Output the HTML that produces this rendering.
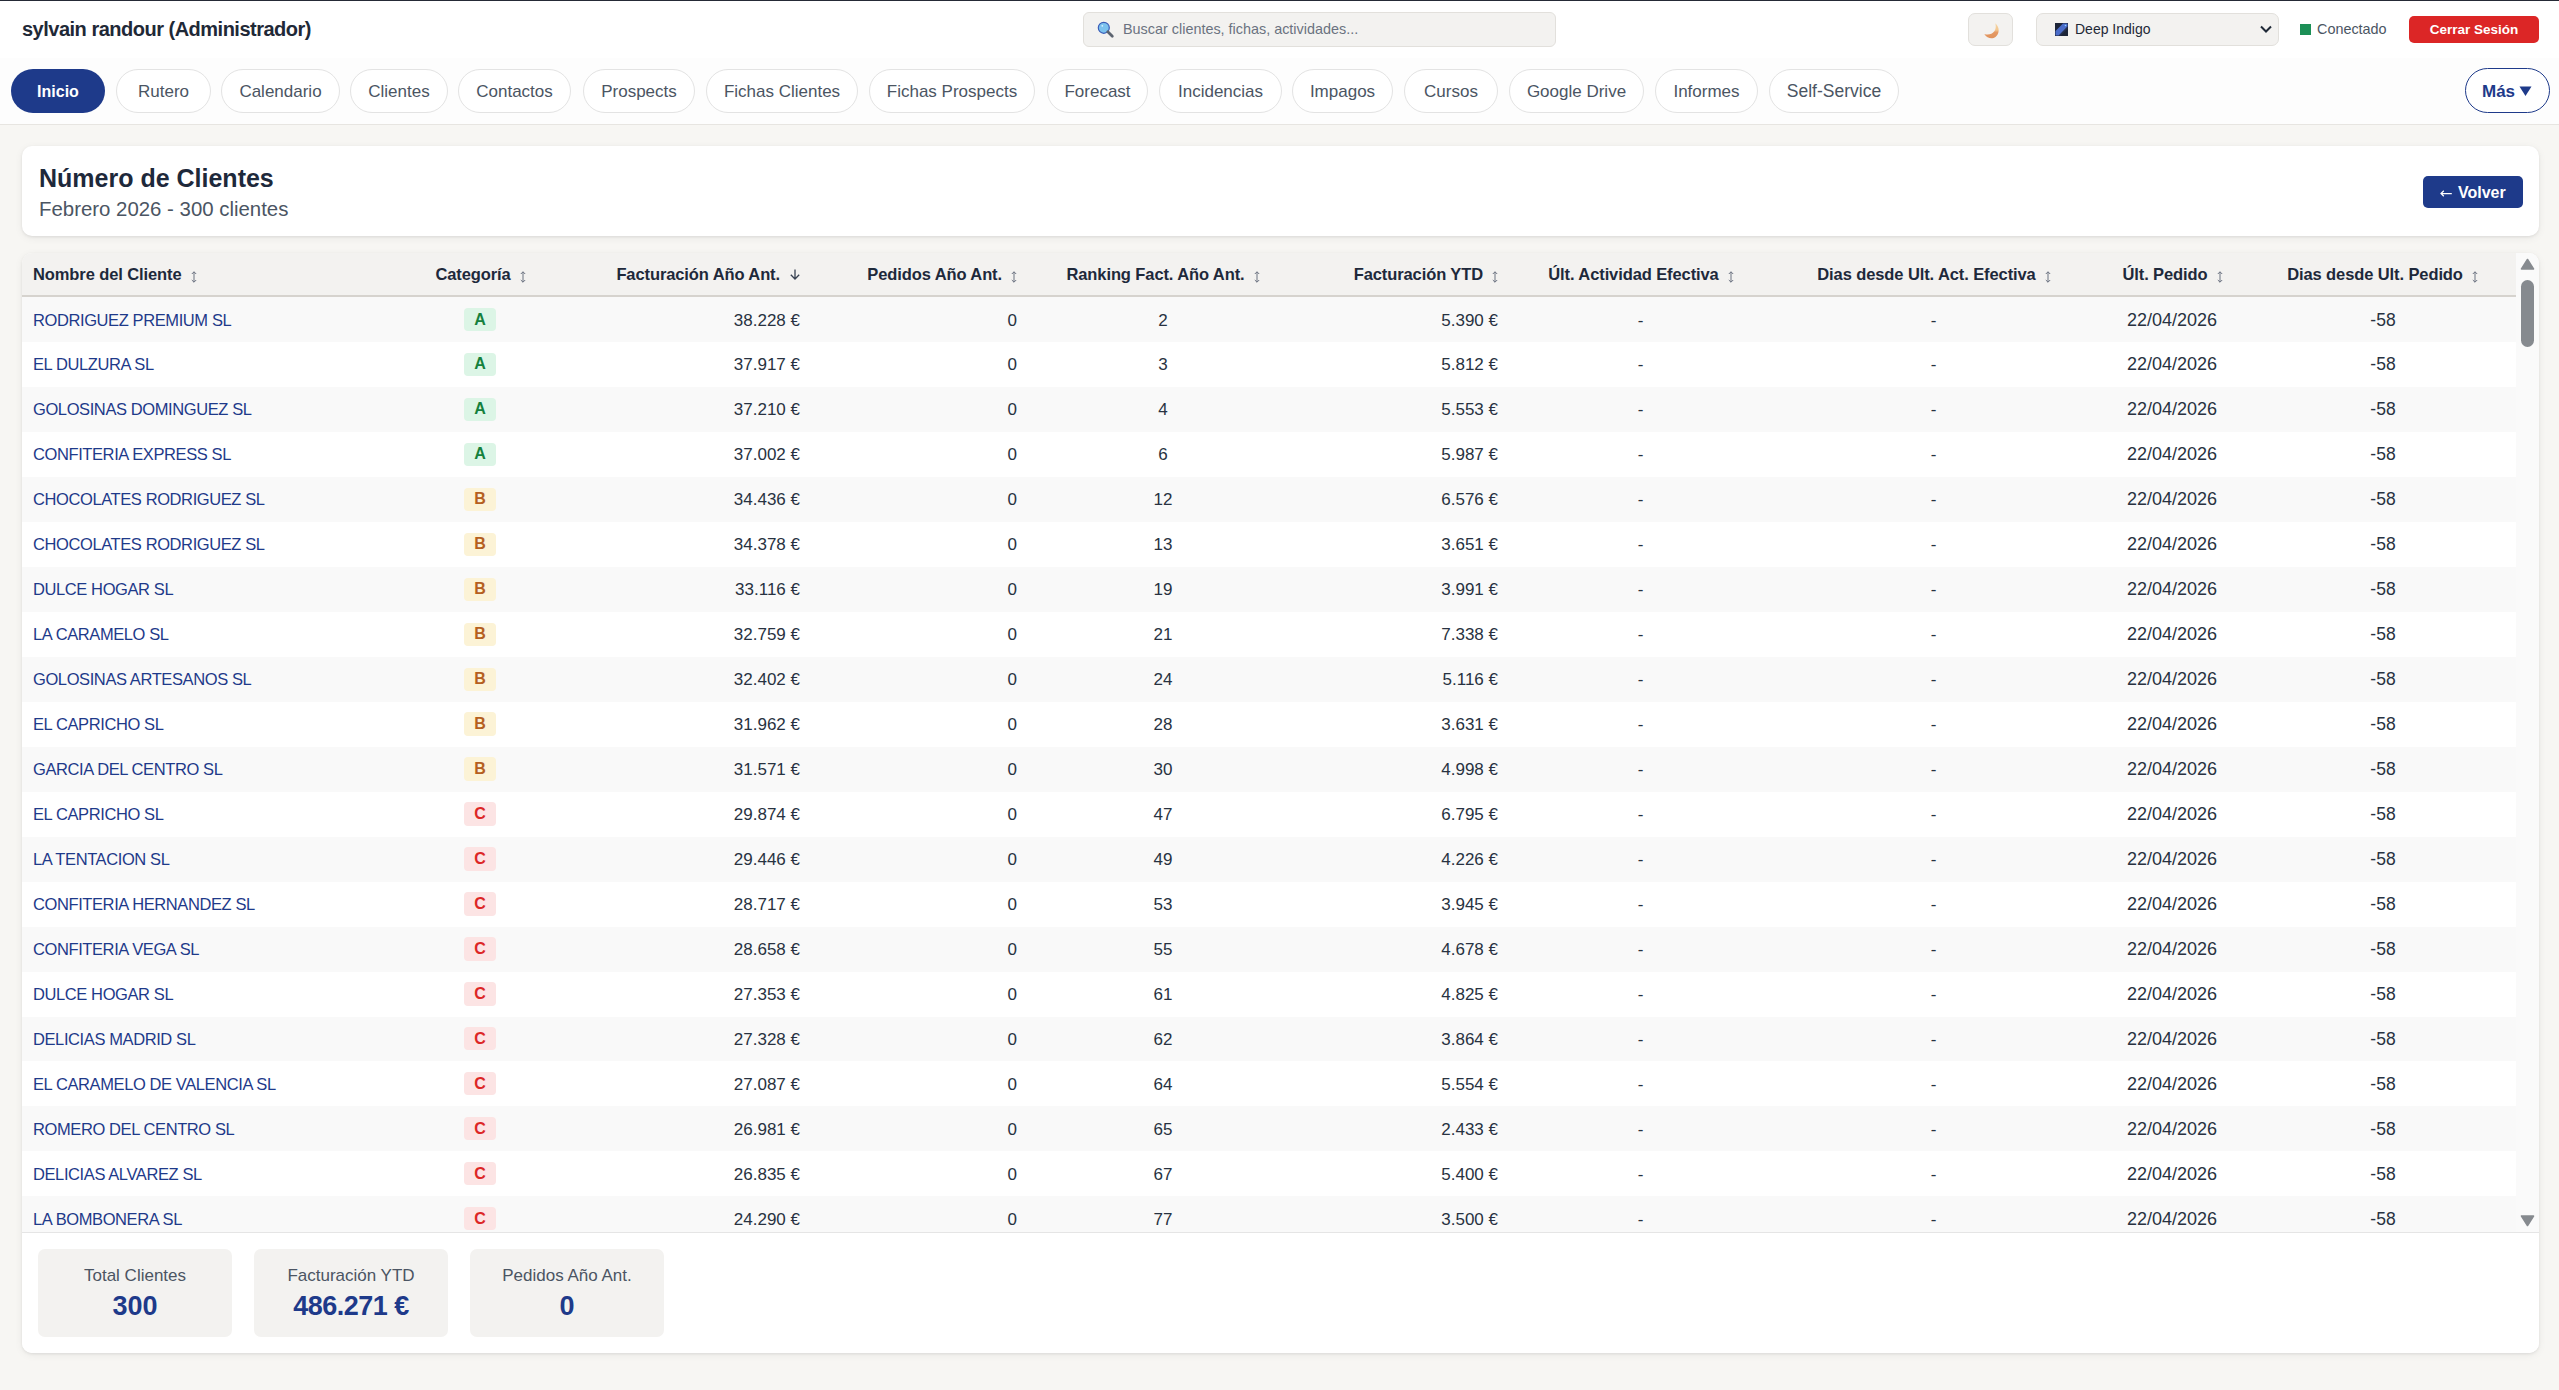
<!DOCTYPE html>
<html><head><meta charset="utf-8"><title>Número de Clientes</title>
<style>
html,body{margin:0;padding:0;}
body{width:2559px;height:1390px;position:relative;overflow:hidden;background:#f7f6f3;font-family:"Liberation Sans", sans-serif;}
.t{position:absolute;white-space:pre;}
</style></head><body>
<div style="position:absolute;left:0px;top:0px;width:2559px;height:58px;background:#fff;"></div>
<div style="position:absolute;left:0px;top:0px;width:2559px;height:1px;background:#252a36;"></div>
<div class="t" style="left:22px;top:19px;font-size:20px;line-height:20px;font-weight:700;color:#1f2937;letter-spacing:-0.5px;">sylvain randour (Administrador)</div>
<div style="position:absolute;left:1083px;top:12px;width:473px;height:35px;background:#f3f2f0;border:1px solid #e2e0dc;border-radius:6px;box-sizing:border-box;"></div>
<svg class="t" style="left:1097px;top:21px" width="18" height="18" viewBox="0 0 18 18"><circle cx="6.8" cy="6.8" r="5.5" fill="#7cc2ee" stroke="#3a5db8" stroke-width="1.2"/><circle cx="5.3" cy="4.8" r="0.9" fill="#d9f0ff"/><path d="M10.8 10.8 L15.3 15.3" stroke="#5c6470" stroke-width="2.8" stroke-linecap="round"/></svg>
<div class="t" style="left:1123px;top:22px;font-size:14.4px;line-height:14.4px;font-weight:400;color:#6b7280;">Buscar clientes, fichas, actividades...</div>
<div style="position:absolute;left:1968px;top:13px;width:45px;height:33px;background:#f3f2f0;border:1px solid #e2e0dc;border-radius:7px;box-sizing:border-box;"></div>
<svg class="t" style="left:1984px;top:23px" width="16" height="16" viewBox="0 0 16 16"><defs><linearGradient id="mg" x1="0" y1="0" x2="0" y2="1"><stop offset="0" stop-color="#f6d7a6"/><stop offset="0.45" stop-color="#f2c68e"/><stop offset="0.6" stop-color="#e59a64"/><stop offset="1" stop-color="#e0925c"/></linearGradient></defs><path d="M11.2 0.3 C15.6 3.5 16 10.5 11.5 14 C8.5 16.2 3.2 15.8 0.3 11 C4.2 12.3 8.2 11.2 10.1 8.6 C11.9 6.2 12.2 3 11.2 0.3 Z" fill="url(#mg)"/></svg>
<div style="position:absolute;left:2036px;top:13px;width:243px;height:33px;background:#f3f2f0;border:1px solid #e2e0dc;border-radius:7px;box-sizing:border-box;"></div>
<svg class="t" style="left:2055px;top:23px" width="13" height="13" viewBox="0 0 13 13"><rect width="13" height="13" fill="#1d2538"/><path d="M0.5 12.5 L0.5 8 L8 0.5 L12.5 0.5 L12.5 5 L5 12.5 Z" fill="#4a6cc9"/><path d="M4 12.8 L12.8 4" stroke="#232c45" stroke-width="1.1"/><circle cx="10.5" cy="2.5" r="0.8" fill="#8fd3ff"/></svg>
<div class="t" style="left:2075px;top:22px;font-size:14px;line-height:14px;font-weight:400;color:#1f2937;">Deep Indigo</div>
<svg class="t" style="left:2259px;top:24px" width="14" height="10" viewBox="0 0 14 10"><path d="M2 2.5 L7 7.5 L12 2.5" fill="none" stroke="#1f2937" stroke-width="2"/></svg>
<div style="position:absolute;left:2300px;top:24px;width:11px;height:11px;background:#1c8f56;"></div>
<div class="t" style="left:2317px;top:22px;font-size:14.4px;line-height:14.4px;font-weight:400;color:#4b5563;">Conectado</div>
<div style="position:absolute;left:2409px;top:16px;width:130px;height:27px;background:#dc2626;border-radius:5px;"></div>
<div class="t" style="left:1874px;width:1200px;text-align:center;top:23px;font-size:13.5px;line-height:13.5px;font-weight:700;color:#ffffff;">Cerrar Sesión</div>
<div style="position:absolute;left:0px;top:58px;width:2559px;height:66px;background:#fdfdfd;"></div>
<div style="position:absolute;left:0px;top:124px;width:2559px;height:1px;background:#e7e5e1;"></div>
<div style="position:absolute;left:11px;top:69px;width:94px;height:44px;background:#1e3a8a;border-radius:22px;"></div>
<div class="t" style="left:-542.0px;width:1200px;text-align:center;top:84px;font-size:16px;line-height:16px;font-weight:700;color:#ffffff;">Inicio</div>
<div style="position:absolute;left:116px;top:69px;width:95px;height:44px;background:#fff;border:1px solid #e3e3e3;border-radius:22px;box-sizing:border-box;"></div>
<div class="t" style="left:-436.5px;width:1200px;text-align:center;top:83px;font-size:17px;line-height:17px;font-weight:400;color:#4b5563;">Rutero</div>
<div style="position:absolute;left:221px;top:69px;width:119px;height:44px;background:#fff;border:1px solid #e3e3e3;border-radius:22px;box-sizing:border-box;"></div>
<div class="t" style="left:-319.5px;width:1200px;text-align:center;top:83px;font-size:17px;line-height:17px;font-weight:400;color:#4b5563;">Calendario</div>
<div style="position:absolute;left:350px;top:69px;width:98px;height:44px;background:#fff;border:1px solid #e3e3e3;border-radius:22px;box-sizing:border-box;"></div>
<div class="t" style="left:-201.0px;width:1200px;text-align:center;top:83px;font-size:17px;line-height:17px;font-weight:400;color:#4b5563;">Clientes</div>
<div style="position:absolute;left:458px;top:69px;width:113px;height:44px;background:#fff;border:1px solid #e3e3e3;border-radius:22px;box-sizing:border-box;"></div>
<div class="t" style="left:-85.5px;width:1200px;text-align:center;top:83px;font-size:17px;line-height:17px;font-weight:400;color:#4b5563;">Contactos</div>
<div style="position:absolute;left:583px;top:69px;width:112px;height:44px;background:#fff;border:1px solid #e3e3e3;border-radius:22px;box-sizing:border-box;"></div>
<div class="t" style="left:39.0px;width:1200px;text-align:center;top:83px;font-size:17px;line-height:17px;font-weight:400;color:#4b5563;">Prospects</div>
<div style="position:absolute;left:706px;top:69px;width:152px;height:44px;background:#fff;border:1px solid #e3e3e3;border-radius:22px;box-sizing:border-box;"></div>
<div class="t" style="left:182.0px;width:1200px;text-align:center;top:83px;font-size:17px;line-height:17px;font-weight:400;color:#4b5563;">Fichas Clientes</div>
<div style="position:absolute;left:869px;top:69px;width:166px;height:44px;background:#fff;border:1px solid #e3e3e3;border-radius:22px;box-sizing:border-box;"></div>
<div class="t" style="left:352.0px;width:1200px;text-align:center;top:83px;font-size:17px;line-height:17px;font-weight:400;color:#4b5563;">Fichas Prospects</div>
<div style="position:absolute;left:1047px;top:69px;width:101px;height:44px;background:#fff;border:1px solid #e3e3e3;border-radius:22px;box-sizing:border-box;"></div>
<div class="t" style="left:497.5px;width:1200px;text-align:center;top:83px;font-size:17px;line-height:17px;font-weight:400;color:#4b5563;">Forecast</div>
<div style="position:absolute;left:1159px;top:69px;width:123px;height:44px;background:#fff;border:1px solid #e3e3e3;border-radius:22px;box-sizing:border-box;"></div>
<div class="t" style="left:620.5px;width:1200px;text-align:center;top:83px;font-size:17px;line-height:17px;font-weight:400;color:#4b5563;">Incidencias</div>
<div style="position:absolute;left:1292px;top:69px;width:101px;height:44px;background:#fff;border:1px solid #e3e3e3;border-radius:22px;box-sizing:border-box;"></div>
<div class="t" style="left:742.5px;width:1200px;text-align:center;top:83px;font-size:17px;line-height:17px;font-weight:400;color:#4b5563;">Impagos</div>
<div style="position:absolute;left:1404px;top:69px;width:94px;height:44px;background:#fff;border:1px solid #e3e3e3;border-radius:22px;box-sizing:border-box;"></div>
<div class="t" style="left:851.0px;width:1200px;text-align:center;top:83px;font-size:17px;line-height:17px;font-weight:400;color:#4b5563;">Cursos</div>
<div style="position:absolute;left:1509px;top:69px;width:135px;height:44px;background:#fff;border:1px solid #e3e3e3;border-radius:22px;box-sizing:border-box;"></div>
<div class="t" style="left:976.5px;width:1200px;text-align:center;top:83px;font-size:17px;line-height:17px;font-weight:400;color:#4b5563;">Google Drive</div>
<div style="position:absolute;left:1655px;top:69px;width:103px;height:44px;background:#fff;border:1px solid #e3e3e3;border-radius:22px;box-sizing:border-box;"></div>
<div class="t" style="left:1106.5px;width:1200px;text-align:center;top:83px;font-size:17px;line-height:17px;font-weight:400;color:#4b5563;">Informes</div>
<div style="position:absolute;left:1769px;top:69px;width:130px;height:44px;background:#fff;border:1px solid #e3e3e3;border-radius:22px;box-sizing:border-box;"></div>
<div class="t" style="left:1234.0px;width:1200px;text-align:center;top:83px;font-size:17.5px;line-height:17.5px;font-weight:400;color:#4b5563;">Self-Service</div>
<div style="position:absolute;left:2465px;top:68px;width:85px;height:45px;background:#fff;border:1.5px solid #1e3a8a;border-radius:23px;box-sizing:border-box;"></div>
<div class="t" style="left:2482px;top:83px;font-size:17px;line-height:17px;font-weight:700;color:#1e3a8a;">Más</div>
<svg class="t" style="left:2519px;top:86px" width="13" height="10" viewBox="0 0 13 10"><path d="M0.5 0.5 L12.5 0.5 L6.5 10 Z" fill="#1e3a8a"/></svg>
<div style="position:absolute;left:22px;top:146px;width:2517px;height:90px;background:#fff;border-radius:10px;box-shadow:0 1px 3px rgba(0,0,0,0.08),0 2px 8px rgba(0,0,0,0.06);"></div>
<div class="t" style="left:39px;top:166px;font-size:25px;line-height:25px;font-weight:700;color:#1e293b;">Número de Clientes</div>
<div class="t" style="left:39px;top:199px;font-size:20.4px;line-height:20.4px;font-weight:400;color:#4b5563;">Febrero 2026 - 300 clientes</div>
<div style="position:absolute;left:2423px;top:176px;width:100px;height:32px;background:#1e3a8a;border-radius:5px;"></div>
<svg class="t" style="left:2440px;top:190px" width="12" height="7" viewBox="0 0 12 7"><path d="M11.8 3.5 H1 M3.8 0.8 L1 3.5 L3.8 6.2" fill="none" stroke="#fff" stroke-width="1.25"/></svg>
<div class="t" style="left:2458px;top:185px;font-size:16px;line-height:16px;font-weight:700;color:#ffffff;">Volver</div>
<div style="position:absolute;left:22px;top:253px;width:2517px;height:1100px;background:#fff;border-radius:10px;box-shadow:0 1px 3px rgba(0,0,0,0.08),0 2px 8px rgba(0,0,0,0.06);"></div>
<div style="position:absolute;left:22px;top:253px;width:2494px;height:42px;background:#f3f2f0;border-top-left-radius:10px;"></div>
<div style="position:absolute;left:22px;top:295px;width:2494px;height:2px;background:#d6d3ce;"></div>
<div style="position:absolute;left:2516px;top:253px;width:23px;height:979px;background:#fafafa;border-top-right-radius:10px;"></div>
<div class="t" style="left:33px;top:266px;font-size:16.5px;line-height:16.5px;font-weight:700;color:#1e293b;letter-spacing:-0.1px;">Nombre del Cliente<svg width="6" height="12" viewBox="0 0 6 12" style="margin-left:9px;vertical-align:-2.5px"><path d="M3 0.8 V11.2 M0.8 3 L3 0.8 L5.2 3 M0.8 9 L3 11.2 L5.2 9" fill="none" stroke="#6b7280" stroke-width="1"/></svg></div>
<div class="t" style="left:-119.5px;width:1200px;text-align:center;top:266px;font-size:16.5px;line-height:16.5px;font-weight:700;color:#1e293b;letter-spacing:-0.1px;">Categoría<svg width="6" height="12" viewBox="0 0 6 12" style="margin-left:9px;vertical-align:-2.5px"><path d="M3 0.8 V11.2 M0.8 3 L3 0.8 L5.2 3 M0.8 9 L3 11.2 L5.2 9" fill="none" stroke="#6b7280" stroke-width="1"/></svg></div>
<div class="t" style="right:1759px;text-align:right;top:266px;font-size:16.5px;line-height:16.5px;font-weight:700;color:#1e293b;letter-spacing:-0.1px;">Facturación Año Ant.<svg width="10" height="11" viewBox="0 0 10 11" style="margin-left:10px;vertical-align:0px"><path d="M5 0.5 V10 M0.8 5.8 L5 10 L9.2 5.8" fill="none" stroke="#374151" stroke-width="1.3"/></svg></div>
<div class="t" style="right:1542px;text-align:right;top:266px;font-size:16.5px;line-height:16.5px;font-weight:700;color:#1e293b;letter-spacing:-0.1px;">Pedidos Año Ant.<svg width="6" height="12" viewBox="0 0 6 12" style="margin-left:9px;vertical-align:-2.5px"><path d="M3 0.8 V11.2 M0.8 3 L3 0.8 L5.2 3 M0.8 9 L3 11.2 L5.2 9" fill="none" stroke="#6b7280" stroke-width="1"/></svg></div>
<div class="t" style="left:563px;width:1200px;text-align:center;top:266px;font-size:16.5px;line-height:16.5px;font-weight:700;color:#1e293b;letter-spacing:-0.1px;">Ranking Fact. Año Ant.<svg width="6" height="12" viewBox="0 0 6 12" style="margin-left:9px;vertical-align:-2.5px"><path d="M3 0.8 V11.2 M0.8 3 L3 0.8 L5.2 3 M0.8 9 L3 11.2 L5.2 9" fill="none" stroke="#6b7280" stroke-width="1"/></svg></div>
<div class="t" style="right:1061px;text-align:right;top:266px;font-size:16.5px;line-height:16.5px;font-weight:700;color:#1e293b;letter-spacing:-0.1px;">Facturación YTD<svg width="6" height="12" viewBox="0 0 6 12" style="margin-left:9px;vertical-align:-2.5px"><path d="M3 0.8 V11.2 M0.8 3 L3 0.8 L5.2 3 M0.8 9 L3 11.2 L5.2 9" fill="none" stroke="#6b7280" stroke-width="1"/></svg></div>
<div class="t" style="left:1041px;width:1200px;text-align:center;top:266px;font-size:16.5px;line-height:16.5px;font-weight:700;color:#1e293b;letter-spacing:-0.1px;">Últ. Actividad Efectiva<svg width="6" height="12" viewBox="0 0 6 12" style="margin-left:9px;vertical-align:-2.5px"><path d="M3 0.8 V11.2 M0.8 3 L3 0.8 L5.2 3 M0.8 9 L3 11.2 L5.2 9" fill="none" stroke="#6b7280" stroke-width="1"/></svg></div>
<div class="t" style="left:1334px;width:1200px;text-align:center;top:266px;font-size:16.5px;line-height:16.5px;font-weight:700;color:#1e293b;letter-spacing:-0.1px;">Dias desde Ult. Act. Efectiva<svg width="6" height="12" viewBox="0 0 6 12" style="margin-left:9px;vertical-align:-2.5px"><path d="M3 0.8 V11.2 M0.8 3 L3 0.8 L5.2 3 M0.8 9 L3 11.2 L5.2 9" fill="none" stroke="#6b7280" stroke-width="1"/></svg></div>
<div class="t" style="left:1572.5px;width:1200px;text-align:center;top:266px;font-size:16.5px;line-height:16.5px;font-weight:700;color:#1e293b;letter-spacing:-0.1px;">Últ. Pedido<svg width="6" height="12" viewBox="0 0 6 12" style="margin-left:9px;vertical-align:-2.5px"><path d="M3 0.8 V11.2 M0.8 3 L3 0.8 L5.2 3 M0.8 9 L3 11.2 L5.2 9" fill="none" stroke="#6b7280" stroke-width="1"/></svg></div>
<div class="t" style="left:1782.5px;width:1200px;text-align:center;top:266px;font-size:16.5px;line-height:16.5px;font-weight:700;color:#1e293b;letter-spacing:-0.1px;">Dias desde Ult. Pedido<svg width="6" height="12" viewBox="0 0 6 12" style="margin-left:9px;vertical-align:-2.5px"><path d="M3 0.8 V11.2 M0.8 3 L3 0.8 L5.2 3 M0.8 9 L3 11.2 L5.2 9" fill="none" stroke="#6b7280" stroke-width="1"/></svg></div>
<div style="position:absolute;left:22px;top:297.3px;width:2494px;height:44.95px;background:#f9f9f9;"></div>
<div class="t" style="left:33px;top:312px;font-size:16.5px;line-height:16.5px;font-weight:400;color:#1e3a8a;letter-spacing:-0.4px;">RODRIGUEZ PREMIUM SL</div>
<div style="position:absolute;left:464px;top:307.9px;width:32px;height:23.4px;background:#dcf5e6;border-radius:4px;"></div>
<div class="t" style="left:-120px;width:1200px;text-align:center;top:312px;font-size:16px;line-height:16px;font-weight:700;color:#15803d;">A</div>
<div class="t" style="right:1759px;text-align:right;top:312px;font-size:17px;line-height:17px;font-weight:400;color:#283241;">38.228 €</div>
<div class="t" style="right:1542px;text-align:right;top:312px;font-size:17px;line-height:17px;font-weight:400;color:#283241;">0</div>
<div class="t" style="left:563px;width:1200px;text-align:center;top:312px;font-size:17px;line-height:17px;font-weight:400;color:#283241;">2</div>
<div class="t" style="right:1061px;text-align:right;top:312px;font-size:17px;line-height:17px;font-weight:400;color:#283241;">5.390 €</div>
<div class="t" style="left:1040.5px;width:1200px;text-align:center;top:312px;font-size:17px;line-height:17px;font-weight:400;color:#283241;">-</div>
<div class="t" style="left:1333.5px;width:1200px;text-align:center;top:312px;font-size:17px;line-height:17px;font-weight:400;color:#283241;">-</div>
<div class="t" style="left:1572px;width:1200px;text-align:center;top:311px;font-size:18px;line-height:18px;font-weight:400;color:#283241;">22/04/2026</div>
<div class="t" style="left:1783px;width:1200px;text-align:center;top:312px;font-size:17.5px;line-height:17.5px;font-weight:400;color:#283241;">-58</div>
<div class="t" style="left:33px;top:356px;font-size:16.5px;line-height:16.5px;font-weight:400;color:#1e3a8a;letter-spacing:-0.4px;">EL DULZURA SL</div>
<div style="position:absolute;left:464px;top:352.85px;width:32px;height:23.4px;background:#dcf5e6;border-radius:4px;"></div>
<div class="t" style="left:-120px;width:1200px;text-align:center;top:356px;font-size:16px;line-height:16px;font-weight:700;color:#15803d;">A</div>
<div class="t" style="right:1759px;text-align:right;top:356px;font-size:17px;line-height:17px;font-weight:400;color:#283241;">37.917 €</div>
<div class="t" style="right:1542px;text-align:right;top:356px;font-size:17px;line-height:17px;font-weight:400;color:#283241;">0</div>
<div class="t" style="left:563px;width:1200px;text-align:center;top:356px;font-size:17px;line-height:17px;font-weight:400;color:#283241;">3</div>
<div class="t" style="right:1061px;text-align:right;top:356px;font-size:17px;line-height:17px;font-weight:400;color:#283241;">5.812 €</div>
<div class="t" style="left:1040.5px;width:1200px;text-align:center;top:356px;font-size:17px;line-height:17px;font-weight:400;color:#283241;">-</div>
<div class="t" style="left:1333.5px;width:1200px;text-align:center;top:356px;font-size:17px;line-height:17px;font-weight:400;color:#283241;">-</div>
<div class="t" style="left:1572px;width:1200px;text-align:center;top:355px;font-size:18px;line-height:18px;font-weight:400;color:#283241;">22/04/2026</div>
<div class="t" style="left:1783px;width:1200px;text-align:center;top:356px;font-size:17.5px;line-height:17.5px;font-weight:400;color:#283241;">-58</div>
<div style="position:absolute;left:22px;top:387.2px;width:2494px;height:44.95px;background:#f9f9f9;"></div>
<div class="t" style="left:33px;top:401px;font-size:16.5px;line-height:16.5px;font-weight:400;color:#1e3a8a;letter-spacing:-0.4px;">GOLOSINAS DOMINGUEZ SL</div>
<div style="position:absolute;left:464px;top:397.8px;width:32px;height:23.4px;background:#dcf5e6;border-radius:4px;"></div>
<div class="t" style="left:-120px;width:1200px;text-align:center;top:401px;font-size:16px;line-height:16px;font-weight:700;color:#15803d;">A</div>
<div class="t" style="right:1759px;text-align:right;top:401px;font-size:17px;line-height:17px;font-weight:400;color:#283241;">37.210 €</div>
<div class="t" style="right:1542px;text-align:right;top:401px;font-size:17px;line-height:17px;font-weight:400;color:#283241;">0</div>
<div class="t" style="left:563px;width:1200px;text-align:center;top:401px;font-size:17px;line-height:17px;font-weight:400;color:#283241;">4</div>
<div class="t" style="right:1061px;text-align:right;top:401px;font-size:17px;line-height:17px;font-weight:400;color:#283241;">5.553 €</div>
<div class="t" style="left:1040.5px;width:1200px;text-align:center;top:401px;font-size:17px;line-height:17px;font-weight:400;color:#283241;">-</div>
<div class="t" style="left:1333.5px;width:1200px;text-align:center;top:401px;font-size:17px;line-height:17px;font-weight:400;color:#283241;">-</div>
<div class="t" style="left:1572px;width:1200px;text-align:center;top:400px;font-size:18px;line-height:18px;font-weight:400;color:#283241;">22/04/2026</div>
<div class="t" style="left:1783px;width:1200px;text-align:center;top:401px;font-size:17.5px;line-height:17.5px;font-weight:400;color:#283241;">-58</div>
<div class="t" style="left:33px;top:446px;font-size:16.5px;line-height:16.5px;font-weight:400;color:#1e3a8a;letter-spacing:-0.4px;">CONFITERIA EXPRESS SL</div>
<div style="position:absolute;left:464px;top:442.75px;width:32px;height:23.4px;background:#dcf5e6;border-radius:4px;"></div>
<div class="t" style="left:-120px;width:1200px;text-align:center;top:446px;font-size:16px;line-height:16px;font-weight:700;color:#15803d;">A</div>
<div class="t" style="right:1759px;text-align:right;top:446px;font-size:17px;line-height:17px;font-weight:400;color:#283241;">37.002 €</div>
<div class="t" style="right:1542px;text-align:right;top:446px;font-size:17px;line-height:17px;font-weight:400;color:#283241;">0</div>
<div class="t" style="left:563px;width:1200px;text-align:center;top:446px;font-size:17px;line-height:17px;font-weight:400;color:#283241;">6</div>
<div class="t" style="right:1061px;text-align:right;top:446px;font-size:17px;line-height:17px;font-weight:400;color:#283241;">5.987 €</div>
<div class="t" style="left:1040.5px;width:1200px;text-align:center;top:446px;font-size:17px;line-height:17px;font-weight:400;color:#283241;">-</div>
<div class="t" style="left:1333.5px;width:1200px;text-align:center;top:446px;font-size:17px;line-height:17px;font-weight:400;color:#283241;">-</div>
<div class="t" style="left:1572px;width:1200px;text-align:center;top:445px;font-size:18px;line-height:18px;font-weight:400;color:#283241;">22/04/2026</div>
<div class="t" style="left:1783px;width:1200px;text-align:center;top:446px;font-size:17.5px;line-height:17.5px;font-weight:400;color:#283241;">-58</div>
<div style="position:absolute;left:22px;top:477.1px;width:2494px;height:44.95px;background:#f9f9f9;"></div>
<div class="t" style="left:33px;top:491px;font-size:16.5px;line-height:16.5px;font-weight:400;color:#1e3a8a;letter-spacing:-0.4px;">CHOCOLATES RODRIGUEZ SL</div>
<div style="position:absolute;left:464px;top:487.7px;width:32px;height:23.4px;background:#fcf3d6;border-radius:4px;"></div>
<div class="t" style="left:-120px;width:1200px;text-align:center;top:491px;font-size:16px;line-height:16px;font-weight:700;color:#b5601f;">B</div>
<div class="t" style="right:1759px;text-align:right;top:491px;font-size:17px;line-height:17px;font-weight:400;color:#283241;">34.436 €</div>
<div class="t" style="right:1542px;text-align:right;top:491px;font-size:17px;line-height:17px;font-weight:400;color:#283241;">0</div>
<div class="t" style="left:563px;width:1200px;text-align:center;top:491px;font-size:17px;line-height:17px;font-weight:400;color:#283241;">12</div>
<div class="t" style="right:1061px;text-align:right;top:491px;font-size:17px;line-height:17px;font-weight:400;color:#283241;">6.576 €</div>
<div class="t" style="left:1040.5px;width:1200px;text-align:center;top:491px;font-size:17px;line-height:17px;font-weight:400;color:#283241;">-</div>
<div class="t" style="left:1333.5px;width:1200px;text-align:center;top:491px;font-size:17px;line-height:17px;font-weight:400;color:#283241;">-</div>
<div class="t" style="left:1572px;width:1200px;text-align:center;top:490px;font-size:18px;line-height:18px;font-weight:400;color:#283241;">22/04/2026</div>
<div class="t" style="left:1783px;width:1200px;text-align:center;top:491px;font-size:17.5px;line-height:17.5px;font-weight:400;color:#283241;">-58</div>
<div class="t" style="left:33px;top:536px;font-size:16.5px;line-height:16.5px;font-weight:400;color:#1e3a8a;letter-spacing:-0.4px;">CHOCOLATES RODRIGUEZ SL</div>
<div style="position:absolute;left:464px;top:532.65px;width:32px;height:23.4px;background:#fcf3d6;border-radius:4px;"></div>
<div class="t" style="left:-120px;width:1200px;text-align:center;top:536px;font-size:16px;line-height:16px;font-weight:700;color:#b5601f;">B</div>
<div class="t" style="right:1759px;text-align:right;top:536px;font-size:17px;line-height:17px;font-weight:400;color:#283241;">34.378 €</div>
<div class="t" style="right:1542px;text-align:right;top:536px;font-size:17px;line-height:17px;font-weight:400;color:#283241;">0</div>
<div class="t" style="left:563px;width:1200px;text-align:center;top:536px;font-size:17px;line-height:17px;font-weight:400;color:#283241;">13</div>
<div class="t" style="right:1061px;text-align:right;top:536px;font-size:17px;line-height:17px;font-weight:400;color:#283241;">3.651 €</div>
<div class="t" style="left:1040.5px;width:1200px;text-align:center;top:536px;font-size:17px;line-height:17px;font-weight:400;color:#283241;">-</div>
<div class="t" style="left:1333.5px;width:1200px;text-align:center;top:536px;font-size:17px;line-height:17px;font-weight:400;color:#283241;">-</div>
<div class="t" style="left:1572px;width:1200px;text-align:center;top:535px;font-size:18px;line-height:18px;font-weight:400;color:#283241;">22/04/2026</div>
<div class="t" style="left:1783px;width:1200px;text-align:center;top:536px;font-size:17.5px;line-height:17.5px;font-weight:400;color:#283241;">-58</div>
<div style="position:absolute;left:22px;top:567.0px;width:2494px;height:44.95px;background:#f9f9f9;"></div>
<div class="t" style="left:33px;top:581px;font-size:16.5px;line-height:16.5px;font-weight:400;color:#1e3a8a;letter-spacing:-0.4px;">DULCE HOGAR SL</div>
<div style="position:absolute;left:464px;top:577.6px;width:32px;height:23.4px;background:#fcf3d6;border-radius:4px;"></div>
<div class="t" style="left:-120px;width:1200px;text-align:center;top:581px;font-size:16px;line-height:16px;font-weight:700;color:#b5601f;">B</div>
<div class="t" style="right:1759px;text-align:right;top:581px;font-size:17px;line-height:17px;font-weight:400;color:#283241;">33.116 €</div>
<div class="t" style="right:1542px;text-align:right;top:581px;font-size:17px;line-height:17px;font-weight:400;color:#283241;">0</div>
<div class="t" style="left:563px;width:1200px;text-align:center;top:581px;font-size:17px;line-height:17px;font-weight:400;color:#283241;">19</div>
<div class="t" style="right:1061px;text-align:right;top:581px;font-size:17px;line-height:17px;font-weight:400;color:#283241;">3.991 €</div>
<div class="t" style="left:1040.5px;width:1200px;text-align:center;top:581px;font-size:17px;line-height:17px;font-weight:400;color:#283241;">-</div>
<div class="t" style="left:1333.5px;width:1200px;text-align:center;top:581px;font-size:17px;line-height:17px;font-weight:400;color:#283241;">-</div>
<div class="t" style="left:1572px;width:1200px;text-align:center;top:580px;font-size:18px;line-height:18px;font-weight:400;color:#283241;">22/04/2026</div>
<div class="t" style="left:1783px;width:1200px;text-align:center;top:581px;font-size:17.5px;line-height:17.5px;font-weight:400;color:#283241;">-58</div>
<div class="t" style="left:33px;top:626px;font-size:16.5px;line-height:16.5px;font-weight:400;color:#1e3a8a;letter-spacing:-0.4px;">LA CARAMELO SL</div>
<div style="position:absolute;left:464px;top:622.55px;width:32px;height:23.4px;background:#fcf3d6;border-radius:4px;"></div>
<div class="t" style="left:-120px;width:1200px;text-align:center;top:626px;font-size:16px;line-height:16px;font-weight:700;color:#b5601f;">B</div>
<div class="t" style="right:1759px;text-align:right;top:626px;font-size:17px;line-height:17px;font-weight:400;color:#283241;">32.759 €</div>
<div class="t" style="right:1542px;text-align:right;top:626px;font-size:17px;line-height:17px;font-weight:400;color:#283241;">0</div>
<div class="t" style="left:563px;width:1200px;text-align:center;top:626px;font-size:17px;line-height:17px;font-weight:400;color:#283241;">21</div>
<div class="t" style="right:1061px;text-align:right;top:626px;font-size:17px;line-height:17px;font-weight:400;color:#283241;">7.338 €</div>
<div class="t" style="left:1040.5px;width:1200px;text-align:center;top:626px;font-size:17px;line-height:17px;font-weight:400;color:#283241;">-</div>
<div class="t" style="left:1333.5px;width:1200px;text-align:center;top:626px;font-size:17px;line-height:17px;font-weight:400;color:#283241;">-</div>
<div class="t" style="left:1572px;width:1200px;text-align:center;top:625px;font-size:18px;line-height:18px;font-weight:400;color:#283241;">22/04/2026</div>
<div class="t" style="left:1783px;width:1200px;text-align:center;top:626px;font-size:17.5px;line-height:17.5px;font-weight:400;color:#283241;">-58</div>
<div style="position:absolute;left:22px;top:656.9px;width:2494px;height:44.95px;background:#f9f9f9;"></div>
<div class="t" style="left:33px;top:671px;font-size:16.5px;line-height:16.5px;font-weight:400;color:#1e3a8a;letter-spacing:-0.4px;">GOLOSINAS ARTESANOS SL</div>
<div style="position:absolute;left:464px;top:667.5px;width:32px;height:23.4px;background:#fcf3d6;border-radius:4px;"></div>
<div class="t" style="left:-120px;width:1200px;text-align:center;top:671px;font-size:16px;line-height:16px;font-weight:700;color:#b5601f;">B</div>
<div class="t" style="right:1759px;text-align:right;top:671px;font-size:17px;line-height:17px;font-weight:400;color:#283241;">32.402 €</div>
<div class="t" style="right:1542px;text-align:right;top:671px;font-size:17px;line-height:17px;font-weight:400;color:#283241;">0</div>
<div class="t" style="left:563px;width:1200px;text-align:center;top:671px;font-size:17px;line-height:17px;font-weight:400;color:#283241;">24</div>
<div class="t" style="right:1061px;text-align:right;top:671px;font-size:17px;line-height:17px;font-weight:400;color:#283241;">5.116 €</div>
<div class="t" style="left:1040.5px;width:1200px;text-align:center;top:671px;font-size:17px;line-height:17px;font-weight:400;color:#283241;">-</div>
<div class="t" style="left:1333.5px;width:1200px;text-align:center;top:671px;font-size:17px;line-height:17px;font-weight:400;color:#283241;">-</div>
<div class="t" style="left:1572px;width:1200px;text-align:center;top:670px;font-size:18px;line-height:18px;font-weight:400;color:#283241;">22/04/2026</div>
<div class="t" style="left:1783px;width:1200px;text-align:center;top:671px;font-size:17.5px;line-height:17.5px;font-weight:400;color:#283241;">-58</div>
<div class="t" style="left:33px;top:716px;font-size:16.5px;line-height:16.5px;font-weight:400;color:#1e3a8a;letter-spacing:-0.4px;">EL CAPRICHO SL</div>
<div style="position:absolute;left:464px;top:712.45px;width:32px;height:23.4px;background:#fcf3d6;border-radius:4px;"></div>
<div class="t" style="left:-120px;width:1200px;text-align:center;top:716px;font-size:16px;line-height:16px;font-weight:700;color:#b5601f;">B</div>
<div class="t" style="right:1759px;text-align:right;top:716px;font-size:17px;line-height:17px;font-weight:400;color:#283241;">31.962 €</div>
<div class="t" style="right:1542px;text-align:right;top:716px;font-size:17px;line-height:17px;font-weight:400;color:#283241;">0</div>
<div class="t" style="left:563px;width:1200px;text-align:center;top:716px;font-size:17px;line-height:17px;font-weight:400;color:#283241;">28</div>
<div class="t" style="right:1061px;text-align:right;top:716px;font-size:17px;line-height:17px;font-weight:400;color:#283241;">3.631 €</div>
<div class="t" style="left:1040.5px;width:1200px;text-align:center;top:716px;font-size:17px;line-height:17px;font-weight:400;color:#283241;">-</div>
<div class="t" style="left:1333.5px;width:1200px;text-align:center;top:716px;font-size:17px;line-height:17px;font-weight:400;color:#283241;">-</div>
<div class="t" style="left:1572px;width:1200px;text-align:center;top:715px;font-size:18px;line-height:18px;font-weight:400;color:#283241;">22/04/2026</div>
<div class="t" style="left:1783px;width:1200px;text-align:center;top:716px;font-size:17.5px;line-height:17.5px;font-weight:400;color:#283241;">-58</div>
<div style="position:absolute;left:22px;top:746.8px;width:2494px;height:44.95px;background:#f9f9f9;"></div>
<div class="t" style="left:33px;top:761px;font-size:16.5px;line-height:16.5px;font-weight:400;color:#1e3a8a;letter-spacing:-0.4px;">GARCIA DEL CENTRO SL</div>
<div style="position:absolute;left:464px;top:757.4px;width:32px;height:23.4px;background:#fcf3d6;border-radius:4px;"></div>
<div class="t" style="left:-120px;width:1200px;text-align:center;top:761px;font-size:16px;line-height:16px;font-weight:700;color:#b5601f;">B</div>
<div class="t" style="right:1759px;text-align:right;top:761px;font-size:17px;line-height:17px;font-weight:400;color:#283241;">31.571 €</div>
<div class="t" style="right:1542px;text-align:right;top:761px;font-size:17px;line-height:17px;font-weight:400;color:#283241;">0</div>
<div class="t" style="left:563px;width:1200px;text-align:center;top:761px;font-size:17px;line-height:17px;font-weight:400;color:#283241;">30</div>
<div class="t" style="right:1061px;text-align:right;top:761px;font-size:17px;line-height:17px;font-weight:400;color:#283241;">4.998 €</div>
<div class="t" style="left:1040.5px;width:1200px;text-align:center;top:761px;font-size:17px;line-height:17px;font-weight:400;color:#283241;">-</div>
<div class="t" style="left:1333.5px;width:1200px;text-align:center;top:761px;font-size:17px;line-height:17px;font-weight:400;color:#283241;">-</div>
<div class="t" style="left:1572px;width:1200px;text-align:center;top:760px;font-size:18px;line-height:18px;font-weight:400;color:#283241;">22/04/2026</div>
<div class="t" style="left:1783px;width:1200px;text-align:center;top:761px;font-size:17.5px;line-height:17.5px;font-weight:400;color:#283241;">-58</div>
<div class="t" style="left:33px;top:806px;font-size:16.5px;line-height:16.5px;font-weight:400;color:#1e3a8a;letter-spacing:-0.4px;">EL CAPRICHO SL</div>
<div style="position:absolute;left:464px;top:802.35px;width:32px;height:23.4px;background:#fce4e4;border-radius:4px;"></div>
<div class="t" style="left:-120px;width:1200px;text-align:center;top:806px;font-size:16px;line-height:16px;font-weight:700;color:#dc2626;">C</div>
<div class="t" style="right:1759px;text-align:right;top:806px;font-size:17px;line-height:17px;font-weight:400;color:#283241;">29.874 €</div>
<div class="t" style="right:1542px;text-align:right;top:806px;font-size:17px;line-height:17px;font-weight:400;color:#283241;">0</div>
<div class="t" style="left:563px;width:1200px;text-align:center;top:806px;font-size:17px;line-height:17px;font-weight:400;color:#283241;">47</div>
<div class="t" style="right:1061px;text-align:right;top:806px;font-size:17px;line-height:17px;font-weight:400;color:#283241;">6.795 €</div>
<div class="t" style="left:1040.5px;width:1200px;text-align:center;top:806px;font-size:17px;line-height:17px;font-weight:400;color:#283241;">-</div>
<div class="t" style="left:1333.5px;width:1200px;text-align:center;top:806px;font-size:17px;line-height:17px;font-weight:400;color:#283241;">-</div>
<div class="t" style="left:1572px;width:1200px;text-align:center;top:805px;font-size:18px;line-height:18px;font-weight:400;color:#283241;">22/04/2026</div>
<div class="t" style="left:1783px;width:1200px;text-align:center;top:806px;font-size:17.5px;line-height:17.5px;font-weight:400;color:#283241;">-58</div>
<div style="position:absolute;left:22px;top:836.7px;width:2494px;height:44.95px;background:#f9f9f9;"></div>
<div class="t" style="left:33px;top:851px;font-size:16.5px;line-height:16.5px;font-weight:400;color:#1e3a8a;letter-spacing:-0.4px;">LA TENTACION SL</div>
<div style="position:absolute;left:464px;top:847.3px;width:32px;height:23.4px;background:#fce4e4;border-radius:4px;"></div>
<div class="t" style="left:-120px;width:1200px;text-align:center;top:851px;font-size:16px;line-height:16px;font-weight:700;color:#dc2626;">C</div>
<div class="t" style="right:1759px;text-align:right;top:851px;font-size:17px;line-height:17px;font-weight:400;color:#283241;">29.446 €</div>
<div class="t" style="right:1542px;text-align:right;top:851px;font-size:17px;line-height:17px;font-weight:400;color:#283241;">0</div>
<div class="t" style="left:563px;width:1200px;text-align:center;top:851px;font-size:17px;line-height:17px;font-weight:400;color:#283241;">49</div>
<div class="t" style="right:1061px;text-align:right;top:851px;font-size:17px;line-height:17px;font-weight:400;color:#283241;">4.226 €</div>
<div class="t" style="left:1040.5px;width:1200px;text-align:center;top:851px;font-size:17px;line-height:17px;font-weight:400;color:#283241;">-</div>
<div class="t" style="left:1333.5px;width:1200px;text-align:center;top:851px;font-size:17px;line-height:17px;font-weight:400;color:#283241;">-</div>
<div class="t" style="left:1572px;width:1200px;text-align:center;top:850px;font-size:18px;line-height:18px;font-weight:400;color:#283241;">22/04/2026</div>
<div class="t" style="left:1783px;width:1200px;text-align:center;top:851px;font-size:17.5px;line-height:17.5px;font-weight:400;color:#283241;">-58</div>
<div class="t" style="left:33px;top:896px;font-size:16.5px;line-height:16.5px;font-weight:400;color:#1e3a8a;letter-spacing:-0.4px;">CONFITERIA HERNANDEZ SL</div>
<div style="position:absolute;left:464px;top:892.25px;width:32px;height:23.4px;background:#fce4e4;border-radius:4px;"></div>
<div class="t" style="left:-120px;width:1200px;text-align:center;top:896px;font-size:16px;line-height:16px;font-weight:700;color:#dc2626;">C</div>
<div class="t" style="right:1759px;text-align:right;top:896px;font-size:17px;line-height:17px;font-weight:400;color:#283241;">28.717 €</div>
<div class="t" style="right:1542px;text-align:right;top:896px;font-size:17px;line-height:17px;font-weight:400;color:#283241;">0</div>
<div class="t" style="left:563px;width:1200px;text-align:center;top:896px;font-size:17px;line-height:17px;font-weight:400;color:#283241;">53</div>
<div class="t" style="right:1061px;text-align:right;top:896px;font-size:17px;line-height:17px;font-weight:400;color:#283241;">3.945 €</div>
<div class="t" style="left:1040.5px;width:1200px;text-align:center;top:896px;font-size:17px;line-height:17px;font-weight:400;color:#283241;">-</div>
<div class="t" style="left:1333.5px;width:1200px;text-align:center;top:896px;font-size:17px;line-height:17px;font-weight:400;color:#283241;">-</div>
<div class="t" style="left:1572px;width:1200px;text-align:center;top:895px;font-size:18px;line-height:18px;font-weight:400;color:#283241;">22/04/2026</div>
<div class="t" style="left:1783px;width:1200px;text-align:center;top:896px;font-size:17.5px;line-height:17.5px;font-weight:400;color:#283241;">-58</div>
<div style="position:absolute;left:22px;top:926.6px;width:2494px;height:44.95px;background:#f9f9f9;"></div>
<div class="t" style="left:33px;top:941px;font-size:16.5px;line-height:16.5px;font-weight:400;color:#1e3a8a;letter-spacing:-0.4px;">CONFITERIA VEGA SL</div>
<div style="position:absolute;left:464px;top:937.2px;width:32px;height:23.4px;background:#fce4e4;border-radius:4px;"></div>
<div class="t" style="left:-120px;width:1200px;text-align:center;top:941px;font-size:16px;line-height:16px;font-weight:700;color:#dc2626;">C</div>
<div class="t" style="right:1759px;text-align:right;top:941px;font-size:17px;line-height:17px;font-weight:400;color:#283241;">28.658 €</div>
<div class="t" style="right:1542px;text-align:right;top:941px;font-size:17px;line-height:17px;font-weight:400;color:#283241;">0</div>
<div class="t" style="left:563px;width:1200px;text-align:center;top:941px;font-size:17px;line-height:17px;font-weight:400;color:#283241;">55</div>
<div class="t" style="right:1061px;text-align:right;top:941px;font-size:17px;line-height:17px;font-weight:400;color:#283241;">4.678 €</div>
<div class="t" style="left:1040.5px;width:1200px;text-align:center;top:941px;font-size:17px;line-height:17px;font-weight:400;color:#283241;">-</div>
<div class="t" style="left:1333.5px;width:1200px;text-align:center;top:941px;font-size:17px;line-height:17px;font-weight:400;color:#283241;">-</div>
<div class="t" style="left:1572px;width:1200px;text-align:center;top:940px;font-size:18px;line-height:18px;font-weight:400;color:#283241;">22/04/2026</div>
<div class="t" style="left:1783px;width:1200px;text-align:center;top:941px;font-size:17.5px;line-height:17.5px;font-weight:400;color:#283241;">-58</div>
<div class="t" style="left:33px;top:986px;font-size:16.5px;line-height:16.5px;font-weight:400;color:#1e3a8a;letter-spacing:-0.4px;">DULCE HOGAR SL</div>
<div style="position:absolute;left:464px;top:982.15px;width:32px;height:23.4px;background:#fce4e4;border-radius:4px;"></div>
<div class="t" style="left:-120px;width:1200px;text-align:center;top:986px;font-size:16px;line-height:16px;font-weight:700;color:#dc2626;">C</div>
<div class="t" style="right:1759px;text-align:right;top:986px;font-size:17px;line-height:17px;font-weight:400;color:#283241;">27.353 €</div>
<div class="t" style="right:1542px;text-align:right;top:986px;font-size:17px;line-height:17px;font-weight:400;color:#283241;">0</div>
<div class="t" style="left:563px;width:1200px;text-align:center;top:986px;font-size:17px;line-height:17px;font-weight:400;color:#283241;">61</div>
<div class="t" style="right:1061px;text-align:right;top:986px;font-size:17px;line-height:17px;font-weight:400;color:#283241;">4.825 €</div>
<div class="t" style="left:1040.5px;width:1200px;text-align:center;top:986px;font-size:17px;line-height:17px;font-weight:400;color:#283241;">-</div>
<div class="t" style="left:1333.5px;width:1200px;text-align:center;top:986px;font-size:17px;line-height:17px;font-weight:400;color:#283241;">-</div>
<div class="t" style="left:1572px;width:1200px;text-align:center;top:985px;font-size:18px;line-height:18px;font-weight:400;color:#283241;">22/04/2026</div>
<div class="t" style="left:1783px;width:1200px;text-align:center;top:986px;font-size:17.5px;line-height:17.5px;font-weight:400;color:#283241;">-58</div>
<div style="position:absolute;left:22px;top:1016.5px;width:2494px;height:44.95px;background:#f9f9f9;"></div>
<div class="t" style="left:33px;top:1031px;font-size:16.5px;line-height:16.5px;font-weight:400;color:#1e3a8a;letter-spacing:-0.4px;">DELICIAS MADRID SL</div>
<div style="position:absolute;left:464px;top:1027.1px;width:32px;height:23.4px;background:#fce4e4;border-radius:4px;"></div>
<div class="t" style="left:-120px;width:1200px;text-align:center;top:1031px;font-size:16px;line-height:16px;font-weight:700;color:#dc2626;">C</div>
<div class="t" style="right:1759px;text-align:right;top:1031px;font-size:17px;line-height:17px;font-weight:400;color:#283241;">27.328 €</div>
<div class="t" style="right:1542px;text-align:right;top:1031px;font-size:17px;line-height:17px;font-weight:400;color:#283241;">0</div>
<div class="t" style="left:563px;width:1200px;text-align:center;top:1031px;font-size:17px;line-height:17px;font-weight:400;color:#283241;">62</div>
<div class="t" style="right:1061px;text-align:right;top:1031px;font-size:17px;line-height:17px;font-weight:400;color:#283241;">3.864 €</div>
<div class="t" style="left:1040.5px;width:1200px;text-align:center;top:1031px;font-size:17px;line-height:17px;font-weight:400;color:#283241;">-</div>
<div class="t" style="left:1333.5px;width:1200px;text-align:center;top:1031px;font-size:17px;line-height:17px;font-weight:400;color:#283241;">-</div>
<div class="t" style="left:1572px;width:1200px;text-align:center;top:1030px;font-size:18px;line-height:18px;font-weight:400;color:#283241;">22/04/2026</div>
<div class="t" style="left:1783px;width:1200px;text-align:center;top:1031px;font-size:17.5px;line-height:17.5px;font-weight:400;color:#283241;">-58</div>
<div class="t" style="left:33px;top:1076px;font-size:16.5px;line-height:16.5px;font-weight:400;color:#1e3a8a;letter-spacing:-0.4px;">EL CARAMELO DE VALENCIA SL</div>
<div style="position:absolute;left:464px;top:1072.05px;width:32px;height:23.4px;background:#fce4e4;border-radius:4px;"></div>
<div class="t" style="left:-120px;width:1200px;text-align:center;top:1076px;font-size:16px;line-height:16px;font-weight:700;color:#dc2626;">C</div>
<div class="t" style="right:1759px;text-align:right;top:1076px;font-size:17px;line-height:17px;font-weight:400;color:#283241;">27.087 €</div>
<div class="t" style="right:1542px;text-align:right;top:1076px;font-size:17px;line-height:17px;font-weight:400;color:#283241;">0</div>
<div class="t" style="left:563px;width:1200px;text-align:center;top:1076px;font-size:17px;line-height:17px;font-weight:400;color:#283241;">64</div>
<div class="t" style="right:1061px;text-align:right;top:1076px;font-size:17px;line-height:17px;font-weight:400;color:#283241;">5.554 €</div>
<div class="t" style="left:1040.5px;width:1200px;text-align:center;top:1076px;font-size:17px;line-height:17px;font-weight:400;color:#283241;">-</div>
<div class="t" style="left:1333.5px;width:1200px;text-align:center;top:1076px;font-size:17px;line-height:17px;font-weight:400;color:#283241;">-</div>
<div class="t" style="left:1572px;width:1200px;text-align:center;top:1075px;font-size:18px;line-height:18px;font-weight:400;color:#283241;">22/04/2026</div>
<div class="t" style="left:1783px;width:1200px;text-align:center;top:1076px;font-size:17.5px;line-height:17.5px;font-weight:400;color:#283241;">-58</div>
<div style="position:absolute;left:22px;top:1106.4px;width:2494px;height:44.95px;background:#f9f9f9;"></div>
<div class="t" style="left:33px;top:1121px;font-size:16.5px;line-height:16.5px;font-weight:400;color:#1e3a8a;letter-spacing:-0.4px;">ROMERO DEL CENTRO SL</div>
<div style="position:absolute;left:464px;top:1117.0px;width:32px;height:23.4px;background:#fce4e4;border-radius:4px;"></div>
<div class="t" style="left:-120px;width:1200px;text-align:center;top:1121px;font-size:16px;line-height:16px;font-weight:700;color:#dc2626;">C</div>
<div class="t" style="right:1759px;text-align:right;top:1121px;font-size:17px;line-height:17px;font-weight:400;color:#283241;">26.981 €</div>
<div class="t" style="right:1542px;text-align:right;top:1121px;font-size:17px;line-height:17px;font-weight:400;color:#283241;">0</div>
<div class="t" style="left:563px;width:1200px;text-align:center;top:1121px;font-size:17px;line-height:17px;font-weight:400;color:#283241;">65</div>
<div class="t" style="right:1061px;text-align:right;top:1121px;font-size:17px;line-height:17px;font-weight:400;color:#283241;">2.433 €</div>
<div class="t" style="left:1040.5px;width:1200px;text-align:center;top:1121px;font-size:17px;line-height:17px;font-weight:400;color:#283241;">-</div>
<div class="t" style="left:1333.5px;width:1200px;text-align:center;top:1121px;font-size:17px;line-height:17px;font-weight:400;color:#283241;">-</div>
<div class="t" style="left:1572px;width:1200px;text-align:center;top:1120px;font-size:18px;line-height:18px;font-weight:400;color:#283241;">22/04/2026</div>
<div class="t" style="left:1783px;width:1200px;text-align:center;top:1121px;font-size:17.5px;line-height:17.5px;font-weight:400;color:#283241;">-58</div>
<div class="t" style="left:33px;top:1166px;font-size:16.5px;line-height:16.5px;font-weight:400;color:#1e3a8a;letter-spacing:-0.4px;">DELICIAS ALVAREZ SL</div>
<div style="position:absolute;left:464px;top:1161.95px;width:32px;height:23.4px;background:#fce4e4;border-radius:4px;"></div>
<div class="t" style="left:-120px;width:1200px;text-align:center;top:1166px;font-size:16px;line-height:16px;font-weight:700;color:#dc2626;">C</div>
<div class="t" style="right:1759px;text-align:right;top:1166px;font-size:17px;line-height:17px;font-weight:400;color:#283241;">26.835 €</div>
<div class="t" style="right:1542px;text-align:right;top:1166px;font-size:17px;line-height:17px;font-weight:400;color:#283241;">0</div>
<div class="t" style="left:563px;width:1200px;text-align:center;top:1166px;font-size:17px;line-height:17px;font-weight:400;color:#283241;">67</div>
<div class="t" style="right:1061px;text-align:right;top:1166px;font-size:17px;line-height:17px;font-weight:400;color:#283241;">5.400 €</div>
<div class="t" style="left:1040.5px;width:1200px;text-align:center;top:1166px;font-size:17px;line-height:17px;font-weight:400;color:#283241;">-</div>
<div class="t" style="left:1333.5px;width:1200px;text-align:center;top:1166px;font-size:17px;line-height:17px;font-weight:400;color:#283241;">-</div>
<div class="t" style="left:1572px;width:1200px;text-align:center;top:1165px;font-size:18px;line-height:18px;font-weight:400;color:#283241;">22/04/2026</div>
<div class="t" style="left:1783px;width:1200px;text-align:center;top:1166px;font-size:17.5px;line-height:17.5px;font-weight:400;color:#283241;">-58</div>
<div style="position:absolute;left:22px;top:1196.3px;width:2494px;height:44.95px;background:#f9f9f9;"></div>
<div class="t" style="left:33px;top:1211px;font-size:16.5px;line-height:16.5px;font-weight:400;color:#1e3a8a;letter-spacing:-0.4px;">LA BOMBONERA SL</div>
<div style="position:absolute;left:464px;top:1206.9px;width:32px;height:23.4px;background:#fce4e4;border-radius:4px;"></div>
<div class="t" style="left:-120px;width:1200px;text-align:center;top:1211px;font-size:16px;line-height:16px;font-weight:700;color:#dc2626;">C</div>
<div class="t" style="right:1759px;text-align:right;top:1211px;font-size:17px;line-height:17px;font-weight:400;color:#283241;">24.290 €</div>
<div class="t" style="right:1542px;text-align:right;top:1211px;font-size:17px;line-height:17px;font-weight:400;color:#283241;">0</div>
<div class="t" style="left:563px;width:1200px;text-align:center;top:1211px;font-size:17px;line-height:17px;font-weight:400;color:#283241;">77</div>
<div class="t" style="right:1061px;text-align:right;top:1211px;font-size:17px;line-height:17px;font-weight:400;color:#283241;">3.500 €</div>
<div class="t" style="left:1040.5px;width:1200px;text-align:center;top:1211px;font-size:17px;line-height:17px;font-weight:400;color:#283241;">-</div>
<div class="t" style="left:1333.5px;width:1200px;text-align:center;top:1211px;font-size:17px;line-height:17px;font-weight:400;color:#283241;">-</div>
<div class="t" style="left:1572px;width:1200px;text-align:center;top:1210px;font-size:18px;line-height:18px;font-weight:400;color:#283241;">22/04/2026</div>
<div class="t" style="left:1783px;width:1200px;text-align:center;top:1211px;font-size:17.5px;line-height:17.5px;font-weight:400;color:#283241;">-58</div>
<div style="position:absolute;left:22px;top:1232px;width:2517px;height:121px;background:#fff;border-bottom-left-radius:10px;border-bottom-right-radius:10px;"></div>
<div style="position:absolute;left:22px;top:1232px;width:2517px;height:1px;background:#e5e5e5;"></div>
<svg class="t" style="left:2520px;top:258px" width="15" height="13" viewBox="0 0 15 13"><path d="M7.5 1.5 L13.5 11 L1.5 11 Z" fill="#868a8f" stroke="#868a8f" stroke-width="1.6" stroke-linejoin="round"/></svg>
<div style="position:absolute;left:2521px;top:280px;width:13px;height:67px;background:#868a8f;border-radius:7px;"></div>
<svg class="t" style="left:2520px;top:1214px" width="15" height="13" viewBox="0 0 15 13"><path d="M1.5 2 L13.5 2 L7.5 11.5 Z" fill="#868a8f" stroke="#868a8f" stroke-width="1.6" stroke-linejoin="round"/></svg>
<div style="position:absolute;left:38px;top:1249px;width:194px;height:88px;background:#f3f2f0;border-radius:7px;"></div>
<div class="t" style="left:-465px;width:1200px;text-align:center;top:1267px;font-size:17px;line-height:17px;font-weight:400;color:#4b5563;">Total Clientes</div>
<div class="t" style="left:-465px;width:1200px;text-align:center;top:1293px;font-size:27px;line-height:27px;font-weight:700;color:#1e3a8a;">300</div>
<div style="position:absolute;left:254px;top:1249px;width:194px;height:88px;background:#f3f2f0;border-radius:7px;"></div>
<div class="t" style="left:-249px;width:1200px;text-align:center;top:1267px;font-size:17px;line-height:17px;font-weight:400;color:#4b5563;">Facturación YTD</div>
<div class="t" style="left:-249px;width:1200px;text-align:center;top:1293px;font-size:27px;line-height:27px;font-weight:700;color:#1e3a8a;letter-spacing:-0.5px;">486.271 €</div>
<div style="position:absolute;left:470px;top:1249px;width:194px;height:88px;background:#f3f2f0;border-radius:7px;"></div>
<div class="t" style="left:-33px;width:1200px;text-align:center;top:1267px;font-size:17px;line-height:17px;font-weight:400;color:#4b5563;">Pedidos Año Ant.</div>
<div class="t" style="left:-33px;width:1200px;text-align:center;top:1293px;font-size:27px;line-height:27px;font-weight:700;color:#1e3a8a;">0</div>
</body></html>
